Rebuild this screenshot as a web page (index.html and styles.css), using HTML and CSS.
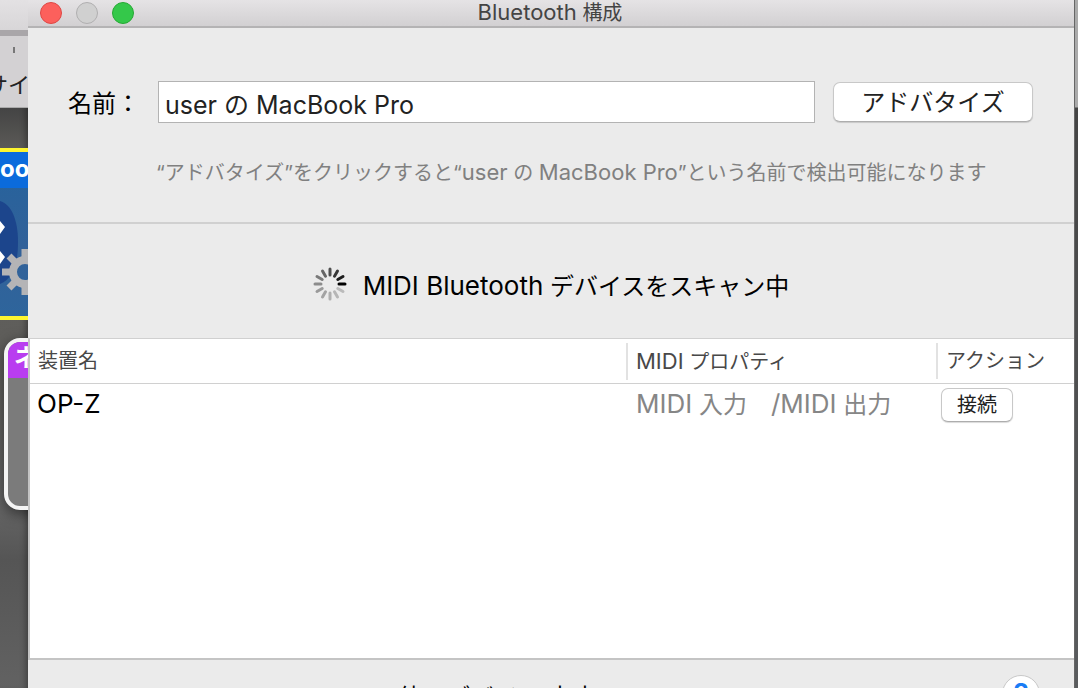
FILE: index.html
```
<!DOCTYPE html>
<html lang="ja">
    <head>
        <title>Bluetooth 構成</title>
        <meta charset="UTF-8">
        <link rel="stylesheet" href="styles.css">
    </head>
    <body>
        <div class="behind">
            <div class="toolbar-top"></div>
            <div class="toolbar">
                <div class="tick"></div>
                <p>サイ</p>
            </div>
            <div class="tile">
                <p class="tile-name">oo</p>
                <svg class="tile-icon" width="28" height="128" viewBox="0 0 28 128">
                    <path d="M0 13C11 16 18 31 18 54C18 78 12 91 0 96Z" fill="#1c458c"/>
                    <path d="M0 33L5 39L0 46ZM0 63L5 69L0 76Z" fill="#fff"/>
                    <g fill="none" stroke="#b4b4b6">
                        <circle cx="25" cy="84" r="12" stroke-width="8"/>
                        <path d="M25 61V70M25 97V107M2 84H12M9 68L16 75M9 100L16 93" stroke-width="7"/>
                    </g>
                </svg>
            </div>
            <div class="card"><p>ネ</p></div>
        </div>
        <main class="window">
            <header class="titlebar">
                <button class="light close" aria-label="閉じる"></button>
                <button class="light minimize" aria-label="しまう" disabled></button>
                <button class="light expand" aria-label="拡大"></button>
                <h1><span class="latin-small">Bluetooth</span> 構成</h1>
            </header>
            <form class="advertise">
                <div class="fields">
                    <label for="name">名前：</label>
                    <input id="name" type="text" value="user の MacBook Pro">
                    <button class="push big" type="button">アドバタイズ</button>
                </div>
                <p class="hint">“アドバタイズ”をクリックすると“<span class="latin-small">user</span> の <span class="latin-small">MacBook Pro</span>”という名前で検出可能になります</p>
            </form>
            <div class="scan">
                <svg width="34" height="34" viewBox="-17 -17 34 34" stroke="#000" stroke-width="3" stroke-linecap="round">
                    <path d="M9 0H15" opacity="1"/>
                    <path d="M9 0H15" transform="rotate(-30)" opacity=".88"/>
                    <path d="M9 0H15" transform="rotate(-60)" opacity=".76"/>
                    <path d="M9 0H15" transform="rotate(-90)" opacity=".66"/>
                    <path d="M9 0H15" transform="rotate(-120)" opacity=".56"/>
                    <path d="M9 0H15" transform="rotate(-150)" opacity=".48"/>
                    <path d="M9 0H15" transform="rotate(180)" opacity=".4"/>
                    <path d="M9 0H15" transform="rotate(150)" opacity=".34"/>
                    <path d="M9 0H15" transform="rotate(120)" opacity=".3"/>
                    <path d="M9 0H15" transform="rotate(90)" opacity=".25"/>
                    <path d="M9 0H15" transform="rotate(60)" opacity=".22"/>
                    <path d="M9 0H15" transform="rotate(30)" opacity=".2"/>
                </svg>
                <p><span class="latin">MIDI Bluetooth</span> デバイスをスキャン中</p>
            </div>
            <div class="devices">
                <table>
                    <thead>
                        <tr>
                            <th class="col-name"><div>装置名</div></th>
                            <th class="col-midi"><div><span class="latin-small">MIDI</span> プロパティ</div></th>
                            <th class="col-action"><div>アクション</div></th>
                        </tr>
                    </thead>
                    <tbody>
                        <tr>
                            <td><span class="latin">OP-Z</span></td>
                            <td class="ports"><span class="latin">MIDI</span> 入力　<span class="latin">/MIDI</span> 出力</td>
                            <td class="action"><button class="push" type="button">接続</button></td>
                        </tr>
                    </tbody>
                </table>
            </div>
            <footer>
                <p>他のデバイス 中止</p>
                <button class="help" type="button">?</button>
            </footer>
        </main>
        <div class="edge"></div>
    </body>
</html>
```
FILE: styles.css
```
*{
    box-sizing: border-box;
}

body{
    margin: 0;
    height: 100vh;
    overflow: hidden;
    display: grid;
    grid-template-columns: 28px 1fr 4px;
    grid-template-rows: 100vh;
    background: #555;
    font-family: Inter, "Noto Sans CJK JP", sans-serif;
    font-size: 24px;
    color: #000;
}

p, h1{
    margin: 0;
    white-space: nowrap;
}

button, input{
    font-family: inherit;
    color: inherit;
}

/* latin letters run a bit larger than the kana beside them */
.latin{
    font-size: 26px;
}

.latin-small{
    font-size: 22px;
}

/* what shows to the left of the window */
.behind{
    overflow: hidden;
    background: linear-gradient(#444 108px, #5c5b58 150px, #5f5e5b 340px, #666 500px, #555 560px, #626262);
    box-shadow: inset -6px 0 6px -4px rgba(0, 0, 0, 0.35);
}

.toolbar-top{
    height: 36px;
    border-bottom: 6px solid #a9a6a9;
    background: linear-gradient(#e3e1e3, #d8d6d8);
}

.toolbar{
    height: 72px;
    padding-top: 11px;
    border-bottom: 1px solid #aaa;
    background: #d3d1d3;
}

.toolbar p{
    margin-left: -14px;
    padding-top: 20px;
    font-size: 22px;
    line-height: 24px;
    color: #222;
}

.tick{
    width: 2px;
    height: 6px;
    margin-left: 13px;
    background: #777;
}

.tile{
    height: 172px;
    margin-top: 40px;
    border-top: 4px solid #fdf52f;
    border-bottom: 4px solid #fdf52f;
    background: linear-gradient(#24639d, #326199 60%, #2e659c);
}

.tile-name{
    height: 36px;
    background: #0b6bdc;
    color: #fff;
    font-size: 24px;
    font-weight: 700;
    line-height: 33px;
}

.tile-icon{
    display: block;
}

.card{
    width: 120px;
    height: 172px;
    margin: 18px 0 0 4px;
    border: 4px solid #f4f4f4;
    border-radius: 16px;
    overflow: hidden;
    background: #7b7b7b;
    box-shadow: 0 4px 14px rgba(0, 0, 0, 0.5);
}

.card p{
    height: 36px;
    padding-left: 6px;
    background: #b93df0;
    color: #fff;
    font-size: 24px;
    font-weight: 700;
    line-height: 32px;
}

.edge{
    background: linear-gradient(#aaa 107px, #444 108px, #5a5c5e);
    border-left: 1px solid #666;
}

.window{
    display: flex;
    flex-direction: column;
    overflow: hidden;
    background: #ebebeb;
}

.titlebar{
    flex: none;
    height: 28px;
    padding: 0 12px 2px;
    display: grid;
    grid-template-columns: 22px 22px 22px 1fr 96px;
    column-gap: 14px;
    align-items: center;
    border-bottom: 2px solid #b4b3b4;
    background: linear-gradient(#e5e3e5, #d2d0d2);
}

.titlebar h1{
    font-size: 20px;
    font-weight: 400;
    line-height: 24px;
    text-align: center;
    color: #444;
}

.light{
    width: 22px;
    height: 22px;
    padding: 0;
    border: 1px solid;
    border-radius: 50%;
}

.close{
    background: #fc605c;
    border-color: #df4744;
}

.minimize{
    background: #d0d0d0;
    border-color: #b0afb0;
}

.expand{
    background: #34c84a;
    border-color: #26a934;
}

.advertise{
    flex: none;
    height: 196px;
    padding: 53px 41px 0 40px;
    border-bottom: 2px solid #d0d0d0;
}

.fields{
    display: flex;
    align-items: center;
}

.fields label{
    flex: none;
    width: 90px;
    padding-bottom: 2px;
}

.fields input{
    flex: 1;
    min-width: 0;
    height: 42px;
    padding: 2px 6px 0;
    border: 1px solid #b3b3b3;
    border-radius: 0;
    background: #fff;
    font-size: 25px;
    color: #222;
}

.push{
    height: 34px;
    padding: 0 15px;
    border: 1px solid #c8c8c8;
    border-bottom-color: #adadad;
    border-radius: 7px;
    background: #fff;
    box-shadow: 0 1px 1px rgba(0, 0, 0, 0.15);
    font-size: 20px;
    line-height: 30px;
    white-space: nowrap;
    color: #222;
}

.big{
    width: 200px;
    height: 40px;
    margin-left: 18px;
    padding-top: 2px;
    font-size: 24px;
    line-height: 34px;
}

.hint{
    margin: 34px 0 0 88px;
    font-size: 20px;
    line-height: 30px;
    color: #808080;
}

.scan{
    flex: none;
    height: 114px;
    padding: 6px 0 0;
    display: flex;
    justify-content: center;
    align-items: center;
    gap: 16px;
}

.devices{
    flex: 1;
    overflow: hidden;
    border: 2px solid #c4c4c4;
    border-top: 1px solid #d0d0d0;
    border-right: 0;
    background: #fff;
}

table{
    width: 100%;
    table-layout: fixed;
    border-spacing: 0;
}

th{
    height: 45px;
    padding: 0;
    border-bottom: 1px solid #d0d0d0;
    font-size: 20px;
    font-weight: 400;
    text-align: left;
    color: #484848;
}

th div{
    padding-left: 8px;
    line-height: 36px;
    border-left: 2px solid #e2e2e2;
}

.col-name div{
    border-left: 0;
}

.col-midi{
    width: 310px;
}

.col-action{
    width: 138px;
}

td{
    height: 40px;
    padding: 0 0 0 7px;
    line-height: 40px;
    white-space: nowrap;
}

.ports{
    padding-left: 10px;
    color: #868686;
}

.action{
    padding-left: 5px;
    font-size: 20px;
}

footer{
    flex: none;
    height: 28px;
    padding: 15px 34px 0 370px;
    display: flex;
    justify-content: space-between;
    align-items: flex-start;
    overflow: hidden;
}

footer p{
    padding-top: 3px;
}

.help{
    width: 38px;
    height: 38px;
    flex: none;
    padding: 0;
    border: 1px solid #c8c8c8;
    border-radius: 50%;
    background: #fff;
    font-size: 28px;
    font-weight: 600;
    color: #1a7cf5;
}
```
